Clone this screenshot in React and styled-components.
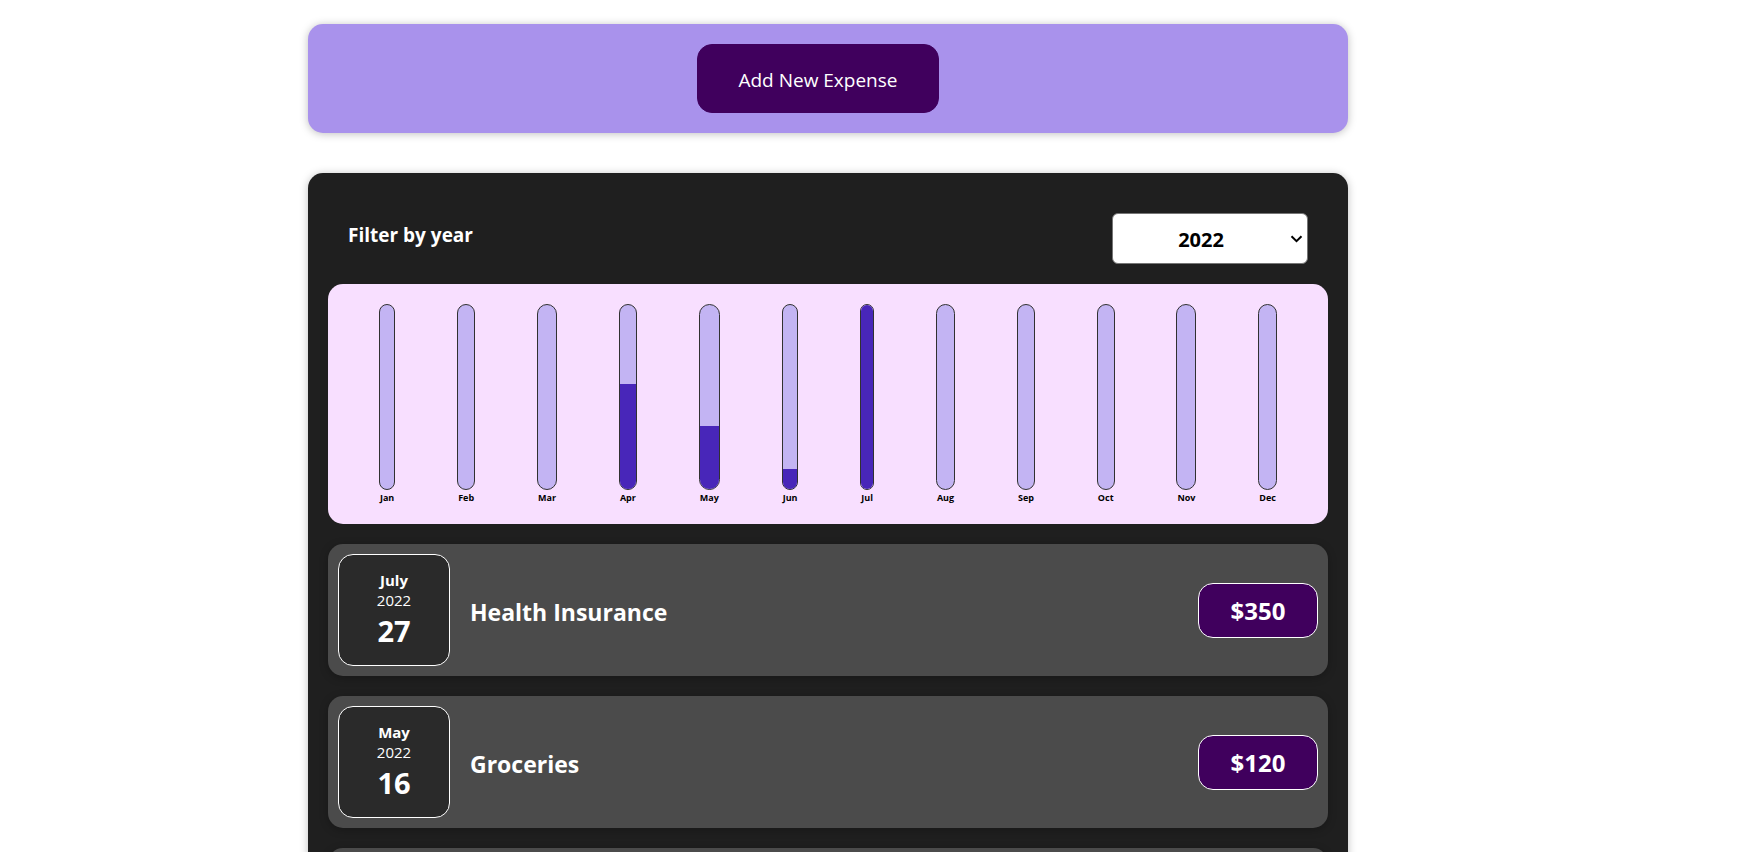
import React, { useState } from "react";
import styled, { createGlobalStyle } from "styled-components";

const GlobalStyle = createGlobalStyle`
  *, *::before, *::after { box-sizing: border-box; }
  body {
    margin: 0;
    background: #ffffff;
    font-family: "Segoe UI", "Open Sans", "Noto Sans", sans-serif;
  }
`;

const Page = styled.main`
  display: flex;
  flex-direction: column;
  align-items: center;
  gap: 40px;
  padding: 24px 81px 40px 0;
`;

const Panel = styled.section`
  width: 100%;
  max-width: 1040px;
  padding: 20px;
  border-radius: 15px;
  box-shadow: 0 1px 8px rgba(0, 0, 0, 0.25);
`;

const NewExpensePanel = styled(Panel)`
  display: flex;
  justify-content: center;
  padding-right: 40px;
  background: #a992ec;
`;

const AddButton = styled.button`
  padding: 22px 40px 18px;
  border: 1px solid #40005d;
  border-radius: 15px;
  background: #40005d;
  color: #ffffff;
  font: inherit;
  font-size: 19px;
  line-height: 27px;
  cursor: pointer;
`;

const ExpensesPanel = styled(Panel)`
  background: #1f1f1f;
`;

const FilterBar = styled.div`
  display: flex;
  justify-content: space-between;
  align-items: flex-start;
  padding: 20px;
`;

const FilterLabel = styled.label`
  padding-top: 8px;
  color: #ffffff;
  font-size: 19px;
  font-weight: 700;
  line-height: 28px;
`;

const SelectBox = styled.div`
  display: grid;
  align-items: center;
  width: 196px;

  > * { grid-area: 1 / 1; }
`;

const YearSelect = styled.select`
  appearance: none;
  width: 100%;
  height: 51px;
  padding: 2px 18px 0 0;
  border: 1px solid #767676;
  border-radius: 6px;
  background: #ffffff;
  color: #000000;
  font: inherit;
  font-size: 20px;
  font-weight: 700;
  text-align: center;
`;

const Chevron = styled.svg`
  justify-self: end;
  margin-right: 5px;
  pointer-events: none;
`;

const Chart = styled.div`
  display: flex;
  justify-content: space-around;
  height: 240px;
  padding: 20px;
  border-radius: 15px;
  background: #f8dfff;
`;

const ChartColumn = styled.div`
  display: flex;
  flex-direction: column;
  align-items: center;
`;

const BarTrack = styled.div`
  display: flex;
  flex: none;
  flex-direction: column;
  justify-content: flex-end;
  width: 100%;
  height: 186px;
  overflow: hidden;
  border: 1px solid #313131;
  border-radius: 12px;
  background: #c3b4f3;
`;

const BarFill = styled.div`
  background: #4826b9;
`;

const BarLabel = styled.span`
  padding: 0 1px;
  color: #000000;
  font-size: 9px;
  font-weight: 700;
  line-height: 16px;
  text-align: center;
`;

const ExpenseList = styled.ul`
  display: flex;
  flex-direction: column;
  gap: 20px;
  margin: 20px 0 0;
  padding: 0;
  list-style: none;
`;

const ExpenseCard = styled.li`
  display: flex;
  align-items: center;
  gap: 20px;
  padding: 10px;
  border-radius: 15px;
  background: #4b4b4b;
  box-shadow: 0 2px 8px rgba(0, 0, 0, 0.25);
  color: #ffffff;
`;

const DateBox = styled.div`
  display: flex;
  flex-direction: column;
  align-items: center;
  justify-content: center;
  width: 112px;
  height: 112px;
  border: 1px solid #ffffff;
  border-radius: 15px;
  background: #2a2a2a;
`;

const Month = styled.span`
  font-size: 15px;
  font-weight: 700;
  line-height: 20px;
`;

const Year = styled.span`
  font-size: 15px;
  line-height: 20px;
`;

const Day = styled.span`
  font-size: 29px;
  font-weight: 700;
  line-height: 41px;
`;

const ExpenseTitle = styled.h2`
  flex: 1;
  margin: 0;
  padding-top: 3px;
  font-size: 23px;
  font-weight: 700;
  line-height: 32px;
`;

const Price = styled.div`
  width: 120px;
  padding: 11px 10px 10px;
  border: 1px solid #ffffff;
  border-radius: 15px;
  background: #40005d;
  font-size: 24px;
  font-weight: 700;
  line-height: 32px;
  text-align: center;
`;

const MONTHS = [
  ["Jan", 0],
  ["Feb", 0],
  ["Mar", 0],
  ["Apr", 200],
  ["May", 120],
  ["Jun", 40],
  ["Jul", 350],
  ["Aug", 0],
  ["Sep", 0],
  ["Oct", 0],
  ["Nov", 0],
  ["Dec", 0],
];

const EXPENSES = [
  { month: "July", day: 27, title: "Health Insurance", amount: 350 },
  { month: "May", day: 16, title: "Groceries", amount: 120 },
  { month: "April", day: 8, title: "Car Repair", amount: 200 },
];

const MAX_AMOUNT = Math.max(...MONTHS.map(([, amount]) => amount));

export default function App() {
  const [year, setYear] = useState("2022");
  return (
    <>
      <GlobalStyle />
      <Page>
        <NewExpensePanel>
          <AddButton type="button">Add New Expense</AddButton>
        </NewExpensePanel>
        <ExpensesPanel>
          <FilterBar>
            <FilterLabel htmlFor="year">Filter by year</FilterLabel>
            <SelectBox>
              <YearSelect id="year" value={year} onChange={(e) => setYear(e.target.value)}>
                <option>2022</option>
                <option>2021</option>
                <option>2020</option>
              </YearSelect>
              <Chevron width="13" height="8" viewBox="0 0 13 8" aria-hidden="true">
                <path d="M1.5 1.2 6.5 6.2 11.5 1.2" fill="none" stroke="#000000" strokeWidth="2" />
              </Chevron>
            </SelectBox>
          </FilterBar>
          <Chart>
            {MONTHS.map(([name, amount]) => (
              <ChartColumn key={name}>
                <BarTrack>
                  <BarFill style={{ height: `${Math.round((amount / MAX_AMOUNT) * 100)}%` }} />
                </BarTrack>
                <BarLabel>{name}</BarLabel>
              </ChartColumn>
            ))}
          </Chart>
          <ExpenseList>
            {EXPENSES.map((expense) => (
              <ExpenseCard key={expense.title}>
                <DateBox>
                  <Month>{expense.month}</Month>
                  <Year>2022</Year>
                  <Day>{expense.day}</Day>
                </DateBox>
                <ExpenseTitle>{expense.title}</ExpenseTitle>
                <Price>${expense.amount}</Price>
              </ExpenseCard>
            ))}
          </ExpenseList>
        </ExpensesPanel>
      </Page>
    </>
  );
}
